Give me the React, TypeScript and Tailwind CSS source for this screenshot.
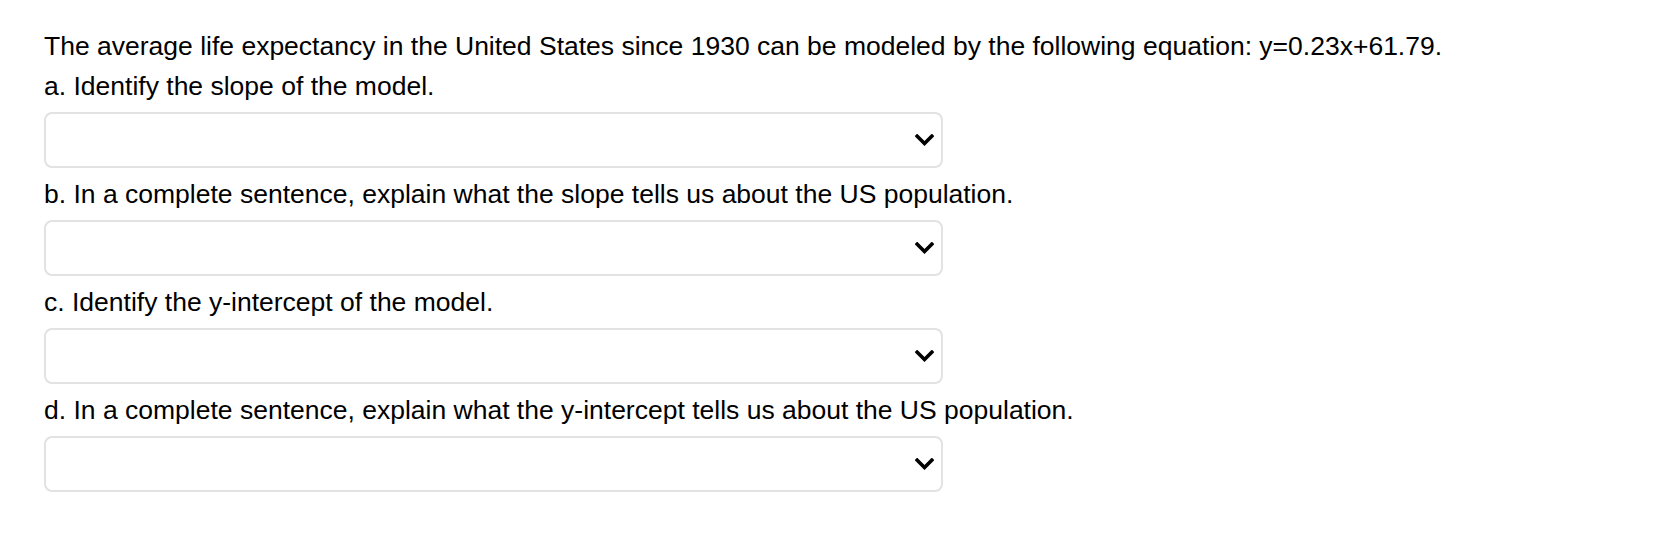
const questions = [
  "a. Identify the slope of the model.",
  "b. In a complete sentence, explain what the slope tells us about the US population.",
  "c. Identify the y-intercept of the model.",
  "d. In a complete sentence, explain what the y-intercept tells us about the US population.",
];

function Chevron() {
  return (
    <svg width="19" height="12" viewBox="0 0 19 12" fill="none" className="shrink-0">
      <path d="M2.2 2.2l7.3 7.3 7.3-7.3" stroke="#000" strokeWidth="3.6" strokeLinecap="square" strokeLinejoin="miter" />
    </svg>
  );
}

function AnswerSelect() {
  return (
    <div className="mt-[8px] flex h-[56px] w-[899px] items-center justify-end rounded-[8px] border-2 border-[#e2e2e2] bg-white pr-[7px]">
      <Chevron />
    </div>
  );
}

export default function App() {
  return (
    <div
      className="min-h-screen bg-white pl-[44px] pt-[28px] text-[26.5px] leading-[36px] text-black"
      style={{ fontFamily: '"Liberation Sans", Arial, sans-serif' }}
    >
      <div>
        The average life expectancy in the United States since 1930 can be modeled by the following equation: y=0.23x+61.79.
      </div>
      {questions.map((q, i) => (
        <div key={q} className={i === 0 ? "mt-[4px]" : "mt-[8px]"}>
          <div>{q}</div>
          <AnswerSelect />
        </div>
      ))}
    </div>
  );
}
